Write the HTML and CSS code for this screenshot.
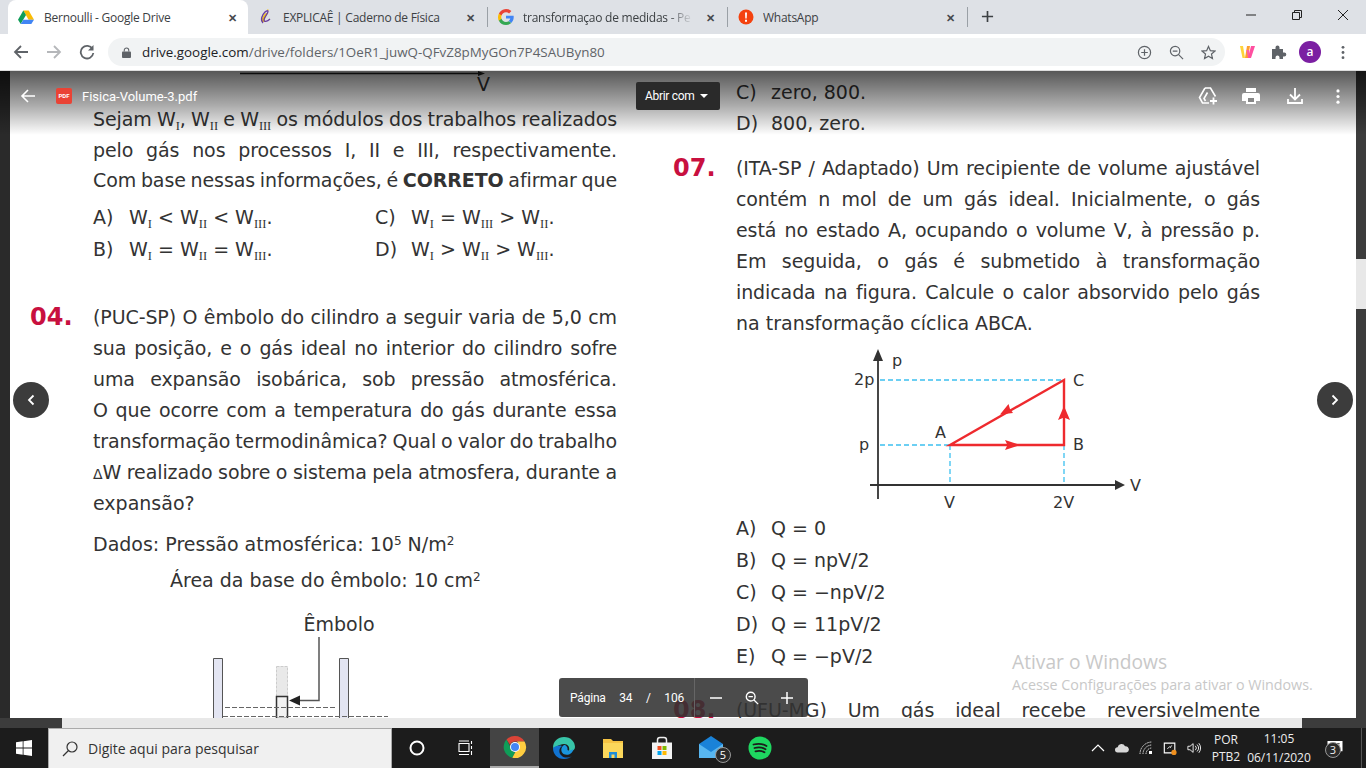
FILE: index.html
```html
<!DOCTYPE html>
<html>
	<head>
		<meta charset="UTF-8">
		<title>Bernoulli - Google Drive</title>
		<link rel="stylesheet" href="styles.css">
	</head>
	<body>
		<div id="tabs">
			<div class="tab on">
				<svg class="ico" viewBox="0 0 16 16"><path d="M5.3 1.500h5.400L16 10.700h-5.400z" fill="#fbbc04"/><path d="M5.300 1.500 0 10.700l2.700 4.300L8 6z" fill="#0f9d58"/><path d="M5.400 10.700H16L13.300 15H2.700z" fill="#4285f4"/></svg>
				<div class="title">Bernoulli - Google Drive</div>
				<div class="x">✕</div>
			</div>
			<div class="tab">
				<svg class="ico" viewBox="0 0 16 16"><path d="M4 13c-1-3 1-7 4-9l2 0C8 7 6 10 7 13zM9 0l2 1-1 1z" fill="#f2c31c"/><path d="M5 14C2 11 4 6 7 3c1-1 3-2 3-.5C10 5 6 8 6 11c0 2 3 2 6-1" fill="none" stroke="#6a3fa0" stroke-width="1.300"/></svg>
				<div class="title">EXPLICAÊ | Caderno de Física</div>
				<div class="x">✕</div>
			</div>
			<div class="sep"></div>
			<div class="tab">
				<svg class="ico" viewBox="0 0 16 16"><path d="M15.700 8.200c0-.6 0-1-.1-1.500H8v2.900h4.300a3.700 3.700 0 0 1-1.600 2.400l2.500 1.900c1.500-1.300 2.500-3.400 2.500-5.700z" fill="#4285f4"/><path d="M8 16c2.200 0 4-.7 5.200-1.900l-2.500-1.900c-.7.500-1.600.8-2.700.8-2.100 0-3.900-1.400-4.500-3.300H.9v2A8 8 0 0 0 8 16z" fill="#34a853"/><path d="M3.500 9.700a4.800 4.800 0 0 1 0-3.100v-2H.9a8 8 0 0 0 0 7.200z" fill="#fbbc04"/><path d="M8 3.200c1.200 0 2.300.4 3.100 1.200l2.300-2.300A8 8 0 0 0 .9 4.500l2.600 2C4.100 4.600 5.900 3.200 8 3.200z" fill="#ea4335"/></svg>
				<div class="title fade">transformaçao de medidas - Pe</div>
				<div class="x">✕</div>
			</div>
			<div class="sep"></div>
			<div class="tab">
				<svg class="ico" viewBox="0 0 16 16"><circle cx="8" cy="8" r="7.500" fill="#f4420f"/><path d="M7 3.500h2l-.3 6H7.300zM7 10.700h2v2H7z" fill="#fff"/></svg>
				<div class="title">WhatsApp</div>
				<div class="x">✕</div>
			</div>
			<div class="sep"></div>
			<svg class="plus" viewBox="0 0 14 14"><path d="M7 1v12M1 7h12" stroke="#3c4043" stroke-width="1.800"/></svg>
			<div class="win">
				<svg viewBox="0 0 12 12"><path d="M1 6h10" stroke="#222"/></svg>
				<svg viewBox="0 0 12 12"><path d="M1.500 3.500h7v7h-7zM3.500 3.500v-2h7v7h-2" fill="none" stroke="#222"/></svg>
				<svg viewBox="0 0 12 12"><path d="M1 1l10 10M11 1 1 11" stroke="#222"/></svg>
			</div>
		</div>

		<div id="bar">
			<svg class="nav" viewBox="0 0 16 16"><path d="M15 8H2M8 2 2 8l6 6" fill="none" stroke="#5f6368" stroke-width="1.800"/></svg>
			<svg class="nav" viewBox="0 0 16 16"><path d="M1 8h13M8 2l6 6-6 6" fill="none" stroke="#b5b7ba" stroke-width="1.800"/></svg>
			<svg class="nav" viewBox="0 0 16 16"><path d="M13.500 5A6.300 6.300 0 1 0 14.300 9" fill="none" stroke="#5f6368" stroke-width="1.800"/><path d="M14.500 1v5.500H9z" fill="#5f6368"/></svg>
			<div id="url">
				<svg class="lock" viewBox="0 0 10 12"><path d="M2.500 5V3.500a2.500 2.500 0 0 1 5 0V5" fill="none" stroke="#5f6368" stroke-width="1.200"/><rect y="5" width="10" height="7" rx="1" fill="#5f6368"/></svg>
				<div class="addr"><b>drive.google.com</b>/drive/folders/1OeR1_juwQ-QFvZ8pMyGOn7P4SAUByn80</div>
				<svg class="uico" viewBox="0 0 16 16"><circle cx="8" cy="8" r="6.500" fill="none" stroke="#5f6368" stroke-width="1.300"/><path d="M8 4.500v7M4.500 8h7" stroke="#5f6368" stroke-width="1.300"/></svg>
				<svg class="uico" viewBox="0 0 16 16"><circle cx="6.500" cy="6.500" r="5" fill="none" stroke="#5f6368" stroke-width="1.300"/><path d="M10 10l5 5M4 6.500h5" stroke="#5f6368" stroke-width="1.300"/></svg>
				<svg class="uico last" viewBox="0 0 16 16"><path d="M8 1.500l2 4.500 4.800.5-3.600 3.200 1 4.800L8 12l-4.200 2.500 1-4.800L1.200 6.500 6 6z" fill="none" stroke="#5f6368" stroke-width="1.300"/></svg>
			</div>
			<svg class="ext" viewBox="0 0 16 14"><path d="M0 1h3l2 12H2.500z" fill="#ffd43a"/><path d="M5 13 7 1h3l-2 12z" fill="#ff9d2e"/><path d="M8 13 6.500 5H9l1.500 8z" fill="#ff5fa2"/><path d="M8 13l3-12h4l-4 12z" fill="#ff4fa0"/></svg>
			<svg class="ext" viewBox="0 0 16 16"><path d="M1 5h3.500V3.500a2 2 0 0 1 4 0V5H12v3.500h1.300a2 2 0 0 1 0 4H12V15H8.500v-1.500a2 2 0 0 0-4 0V15H1z" fill="#5f6368"/></svg>
			<div class="avatar">a</div>
			<svg class="dots" viewBox="0 0 4 16"><circle cx="2" cy="2.500" r="1.500" fill="#5f6368"/><circle cx="2" cy="8" r="1.500" fill="#5f6368"/><circle cx="2" cy="13.500" r="1.500" fill="#5f6368"/></svg>
		</div>

		<div id="viewer">
			<div id="mid">
				<div class="gutter"></div>
				<div id="page">
					<div class="col">
						<svg class="figtop" viewBox="0 0 480 33">
							<path d="M210 2.500h240" stroke="#222" stroke-width="1.500"/><path d="M448 0l7 2.500-7 2.500z" fill="#222"/>
							<text x="447" y="20" class="figt big">V</text>
						</svg>
						<div class="txt">
							<div class="ln">Sejam W<sub>I</sub>, W<sub>II</sub> e W<sub>III</sub> os módulos dos trabalhos realizados</div>
							<div class="ln">pelo gás nos processos I, II e III, respectivamente.</div>
							<div class="ln">Com base nessas informações, é <b>CORRETO</b> afirmar que</div>
						</div>
						<div class="opts two">
							<div class="opt"><span>A)</span>W<sub>I</sub> &lt; W<sub>II</sub> &lt; W<sub>III</sub>.</div>
							<div class="opt"><span>C)</span>W<sub>I</sub> = W<sub>III</sub> &gt; W<sub>II</sub>.</div>
							<div class="opt"><span>B)</span>W<sub>I</sub> = W<sub>II</sub> = W<sub>III</sub>.</div>
							<div class="opt"><span>D)</span>W<sub>I</sub> &gt; W<sub>II</sub> &gt; W<sub>III</sub>.</div>
						</div>
						<div class="q q04">
							<div class="num">04.</div>
							<div>
								<div class="ln">(PUC-SP) O êmbolo do cilindro a seguir varia de 5,0 cm</div>
								<div class="ln">sua posição, e o gás ideal no interior do cilindro sofre</div>
								<div class="ln">uma expansão isobárica, sob pressão atmosférica.</div>
								<div class="ln">O que ocorre com a temperatura do gás durante essa</div>
								<div class="ln">transformação termodinâmica? Qual o valor do trabalho</div>
								<div class="ln"><small>Δ</small>W realizado sobre o sistema pela atmosfera, durante a</div>
								<div class="end">expansão?</div>
							</div>
						</div>
						<div class="dados">Dados: Pressão atmosférica: 10<sup>5</sup> N/m<sup>2</sup></div>
						<div class="area">Área da base do êmbolo: 10 cm<sup>2</sup></div>
						<svg class="figemb" viewBox="0 0 200 118">
							<text x="139" y="31" text-anchor="middle" class="figt big">Êmbolo</text>
							<path d="M13.500 58.500h9v60h-9zM139.500 58.500h9v60h-9z" fill="#e3e5f2" stroke="#555"/>
							<path d="M76.500 66.500h11v30h-11z" fill="#e9e9e9" stroke="#ccc" stroke-dasharray="3 1"/>
							<path d="M76.500 96.500h11v22h-11z" fill="#f2f2f2" stroke="#333" stroke-width="1.500"/>
							<path d="M25 107.500h112M23 116.500h165" stroke="#666" stroke-dasharray="5 2"/>
							<path d="M119 37v63.500H96" fill="none" stroke="#555" stroke-width="1.500"/>
							<path d="M89 100.500l11-5v10z" fill="#222"/>
						</svg>
					</div>
					<div class="col">
						<div class="opts first">
							<div class="opt"><span>C)</span>zero, 800.</div>
							<div class="opt"><span>D)</span>800, zero.</div>
						</div>
						<div class="q q07">
							<div class="num">07.</div>
							<div>
								<div class="ln">(ITA-SP / Adaptado) Um recipiente de volume ajustável</div>
								<div class="ln">contém n mol de um gás ideal. Inicialmente, o gás</div>
								<div class="ln">está no estado A, ocupando o volume V, à pressão p.</div>
								<div class="ln">Em seguida, o gás é submetido à transformação</div>
								<div class="ln">indicada na figura. Calcule o calor absorvido pelo gás</div>
								<div class="end">na transformação cíclica ABCA.</div>
							</div>
						</div>
						<svg class="figpv" viewBox="0 0 330 172">
							<g fill="none" stroke="#3cc0f0" stroke-width="1.300" stroke-dasharray="5 3">
								<path d="M50 40h184M50 105h70M120 105v40M234 105v40"/>
							</g>
							<path d="M48 159V14M40 145h248" stroke="#333" stroke-width="1.800" fill="none"/>
							<path d="M48 9l5 12H43zM295 145l-10 5v-10z" fill="#333"/>
							<path d="M120 105h114V40z" fill="none" stroke="#ee2a2e" stroke-width="2.400"/>
							<path d="M190 105l-15 5 2.500-5-2.500-5zM234 66l6 14-6-2.500-6 2.500zM170 74.500l13-1.500-3-4-1.500-5z" fill="#ee2a2e"/>
							<text x="62" y="26" class="figt">p</text>
							<text x="24" y="45" class="figt">2p</text>
							<text x="29" y="110" class="figt">p</text>
							<text x="105" y="98" class="figt">A</text>
							<text x="243" y="110" class="figt">B</text>
							<text x="243" y="46" class="figt">C</text>
							<text x="114" y="168" class="figt">V</text>
							<text x="223" y="168" class="figt">2V</text>
							<text x="300" y="151" class="figt">V</text>
						</svg>
						<div class="opts five">
							<div class="opt"><span>A)</span>Q = 0</div>
							<div class="opt"><span>B)</span>Q = npV/2</div>
							<div class="opt"><span>C)</span>Q = −npV/2</div>
							<div class="opt"><span>D)</span>Q = 11pV/2</div>
							<div class="opt"><span>E)</span>Q = −pV/2</div>
						</div>
						<div class="q q08">
							<div class="num">08.</div>
							<div class="ln">(UFU-MG) Um gás ideal recebe reversivelmente</div>
						</div>
					</div>
				</div>
				<div class="vbar"><div class="vthumb"></div></div>
			</div>
			<div class="hbar"><div class="hthumb"></div></div>

			<div id="head">
				<svg class="hback" viewBox="0 0 16 16"><path d="M15 8H2M8 2 2 8l6 6" fill="none" stroke="#fff" stroke-width="1.600"/></svg>
				<div class="pdf">PDF</div>
				<div class="fname">Fisica-Volume-3.pdf</div>
				<div class="abrir">Abrir com <i></i></div>
				<svg class="hico" viewBox="0 0 20 20"><path d="M7 2h5.500l5 8.500M7 2 1.500 11.500 4.500 17H11M9.500 6.500 6 12.500 7.500 15" fill="none" stroke="#fff" stroke-width="1.600"/><path d="M15.500 11.500v7M12 15h7" stroke="#fff" stroke-width="1.800"/></svg>
				<svg class="hico" viewBox="0 0 20 20"><path d="M5 2h10v4H5zM3 7h14a2 2 0 0 1 2 2v6h-4v3H5v-3H1V9a2 2 0 0 1 2-2z" fill="#fff"/><path d="M7 12h6v4H7z" fill="#888"/></svg>
				<svg class="hico dl" viewBox="0 0 20 20"><path d="M10 2v11M5 8.500l5 5 5-5M3 13v4h14v-4" fill="none" stroke="#fff" stroke-width="1.800"/></svg>
				<svg class="hdots" viewBox="0 0 4 16"><circle cx="2" cy="2" r="1.700" fill="#fff"/><circle cx="2" cy="8" r="1.700" fill="#fff"/><circle cx="2" cy="14" r="1.700" fill="#fff"/></svg>
			</div>

			<div class="round rl"><svg viewBox="0 0 10 12"><path d="M7.500 1.500 3 6l4.500 4.500" fill="none" stroke="#fff" stroke-width="1.800"/></svg></div>
			<div class="round rr"><svg viewBox="0 0 10 12"><path d="M2.500 1.500 7 6l-4.500 4.500" fill="none" stroke="#fff" stroke-width="1.800"/></svg></div>

			<div class="mark">
				<div class="m1">Ativar o Windows</div>
				<div class="m2">Acesse Configurações para ativar o Windows.</div>
			</div>

			<div id="pager">
				<div class="pinfo"><span>Página</span><span>34</span><span>/</span><span>106</span></div>
				<div class="pzoom">
					<svg viewBox="0 0 14 14"><path d="M1 7h12" stroke="#fff" stroke-width="1.500"/></svg>
					<svg viewBox="0 0 16 16"><circle cx="6.500" cy="6.500" r="5" fill="none" stroke="#fff" stroke-width="1.600"/><path d="M10 10l5 5M4 6.500h5" stroke="#fff" stroke-width="1.500"/></svg>
					<svg viewBox="0 0 14 14"><path d="M1 7h12" stroke="#fff" stroke-width="1.500"/><path d="M7 1v12" stroke="#fff" stroke-width="1.500"/></svg>
				</div>
			</div>
		</div>

		<div id="task">
			<div class="start"><svg viewBox="0 0 16 16"><path d="M0 2.300 6.700 1.300v6.300H0zM7.500 1.200 16 0v7.600H7.500zM0 8.400h6.700v6.300L0 13.700zM7.500 8.400H16V16l-8.500-1.200z" fill="#fff"/></svg></div>
			<div class="search">
				<svg viewBox="0 0 16 16"><circle cx="10" cy="6" r="5" fill="none" stroke="#333" stroke-width="1.200"/><path d="M6.500 9.500 1 15" stroke="#333" stroke-width="1.300"/></svg>
				<span>Digite aqui para pesquisar</span>
			</div>
			<div class="tk"><svg class="i16" viewBox="0 0 16 16"><circle cx="8" cy="8" r="6.500" fill="none" stroke="#fff" stroke-width="2"/></svg></div>
			<div class="tk"><svg class="i16" viewBox="0 0 16 16"><path d="M1 3.500h10v8H1zM1 1h10M1 14.500h10M13.500 1v3M13.500 6v3M13.500 11v4" fill="none" stroke="#fff" stroke-width="1.100"/></svg></div>
			<div class="tk act">
				<svg class="i24" viewBox="0 0 24 24"><path d="M12 1a11 11 0 0 1 9.500 5.500H12a5.500 5.500 0 0 0-5 3.200L3.500 4.600A11 11 0 0 1 12 1z" fill="#db4437"/><path d="M3.500 4.600 7.800 13a5 5 0 0 0 4.500 4l-3 5.700A11 11 0 0 1 3.500 4.600z" fill="#0f9d58"/><path d="M21.500 6.500A11 11 0 0 1 9.300 22.700L14.500 13a5 5 0 0 0-.5-6.500z" fill="#ffcd40"/><circle cx="12" cy="12" r="5" fill="#fff"/><circle cx="12" cy="12" r="4" fill="#4285f4"/></svg>
			</div>
			<div class="tk">
				<svg class="i24" viewBox="0 0 24 24"><path d="M1 12C1 5 6 1 12 1c7 0 11 5 11 10 0 3-3 5-6 4 1-4-1-7-5-7-5 0-9 4-11 4z" fill="#38c5a8"/><path d="M1 12c2-2 6-3 9-2-3 2-4 7 0 10 2 2 7 2 10 0-2 2-5 3-8 3C5 23 1 18 1 12z" fill="#1173d1"/><path d="M12 9c2 0 4 2 3.500 5 2 1 4 .5 6-1-1 5-6 7-10 5-3-2-3-7 .5-9z" fill="#1a95dd"/></svg>
			</div>
			<div class="tk">
				<svg class="i24" viewBox="0 0 24 24"><path d="M2 3h8l2 2h10v17H2z" fill="#f6c343"/><path d="M2 7h20v15H2z" fill="#fbd75b"/><path d="M8 16h8v6H8z" fill="#1e8dd8"/><path d="M10.500 18.500h3V22h-3z" fill="#fbd75b"/></svg>
			</div>
			<div class="tk">
				<svg class="i24" viewBox="0 0 24 24"><path d="M7.500 7V4a2.500 2.500 0 0 1 2.500-2.500h4A2.500 2.500 0 0 1 16.500 4v3" fill="none" stroke="#eee" stroke-width="1.500"/><path d="M2 6.500h20V23H2z" fill="#f3f3f3"/><path d="M7.500 10h4v4h-4z" fill="#f25022"/><path d="M12.500 10h4v4h-4z" fill="#7fba00"/><path d="M7.500 15h4v4h-4z" fill="#00a4ef"/><path d="M12.500 15h4v4h-4z" fill="#ffb900"/></svg>
			</div>
			<div class="tk">
				<svg class="i24" viewBox="0 0 24 24"><path d="M0 8 12 0l12 8v14H0z" fill="#1a82d8"/><path d="M0 8l12 8 12-8v14H0z" fill="#58b6f0"/></svg>
				<div class="badge bm">5</div>
			</div>
			<div class="tk">
				<svg class="i24" viewBox="0 0 24 24"><circle cx="12" cy="12" r="11.500" fill="#1ed760"/><path d="M5.500 8.500c4-1 9-1 13 1.500M6.500 12c3.500-1 8-.6 11 1.300M7.500 15.300c3-.8 6.500-.5 9 1" fill="none" stroke="#1c1c1c" stroke-width="1.800" stroke-linecap="round"/></svg>
			</div>
			<div class="tray">
				<svg class="tr" viewBox="0 0 14 14"><path d="M1 10l6-6 6 6" fill="none" stroke="#fff" stroke-width="1.200"/></svg>
				<svg class="tr" viewBox="0 0 16 14"><path d="M3 12a3 3 0 0 1 0-6 4.500 4.500 0 0 1 8.500-1A3.500 3.500 0 0 1 13 12z" fill="#d8d8d8"/></svg>
				<svg class="tr" viewBox="0 0 14 14"><path d="M1 13A12 12 0 0 1 13 1M4 13a9 9 0 0 1 9-9M7 13a6 6 0 0 1 6-6" fill="none" stroke="#ddd" stroke-dasharray="1.500 .8"/><path d="M10 10h3v3h-3z" fill="#fff"/></svg>
				<svg class="tr" viewBox="0 0 16 16"><path d="M1.500 2.500h12v11h-12z" fill="none" stroke="#fff" stroke-width="1.300"/><path d="M5 9l3-3M8 8l2-3" stroke="#fff"/><circle cx="12.500" cy="13" r="3" fill="#f0901e"/></svg>
				<svg class="tr" viewBox="0 0 16 14"><path d="M1 5h2.500L7 2v10L3.500 9H1zM9.500 4.500a3.500 3.500 0 0 1 0 5M11.500 3a6 6 0 0 1 0 8M13.500 1.500a8.500 8.500 0 0 1 0 11" fill="none" stroke="#fff"/></svg>
				<div class="lang"><div>POR</div><div>PTB2</div></div>
				<div class="clock"><div>11:05</div><div>06/11/2020</div></div>
				<div class="notif">
					<svg viewBox="0 0 16 16"><path d="M0 1h16v11H6l-3 3v-3H0z" fill="#fff"/><path d="M3 4h10M3 6.500h10M3 9h7" stroke="#1c1c1c"/></svg>
					<div class="badge bn">3</div>
				</div>
				<div class="peek"></div>
			</div>
		</div>
	</body>
</html>
```

FILE: styles.css
```css
*{
	box-sizing: border-box;
}
html, body{
	margin: 0;
	height: 768px;
	overflow: hidden;
}
body{
	font-family: "Open Sans", "Noto Sans", sans-serif;
	background: #fff;
}
svg{
	display: block;
	flex: none;
}

/* chrome */
#tabs{
	height: 34px;
	background: #dee1e6;
	display: flex;
	align-items: stretch;
	padding-left: 8px;
	font-size: 12px;
	letter-spacing: -.25px;
	color: #3c4043;
}
.tab{
	width: 239px;
	display: flex;
	align-items: center;
	gap: 9px;
	padding: 0 9px 0 10px;
}
.tab.on{
	background: #fff;
	border-radius: 8px 8px 0 0;
	width: 240px;
	gap: 10px;
	padding-right: 8px;
}
.ico{
	width: 16px;
	height: 16px;
}
.title{
	flex: 1;
	white-space: nowrap;
	overflow: hidden;
}
.title.fade{
	-webkit-mask-image: linear-gradient(to right, #000 85%, transparent);
	mask-image: linear-gradient(to right, #000 85%, transparent);
}
.x{
	width: 16px;
	text-align: center;
	font-size: 11px;
	font-weight: bold;
	color: #45494d;
}
.sep{
	width: 1px;
	height: 20px;
	margin-top: 7px;
	background: #9aa0a6;
}
.plus{
	width: 13px;
	height: 13px;
	margin: 10px 0 0 13px;
}
.win{
	margin-left: auto;
	display: flex;
	gap: 34px;
	padding: 9px 17px 0 0;
}
.win svg{
	width: 12px;
	height: 12px;
}
#bar{
	height: 37px;
	background: #fff;
	display: flex;
	align-items: center;
	padding-left: 13px;
	border-bottom: 1px solid #ddd;
}
.nav{
	width: 16px;
	height: 16px;
	margin-right: 17px;
}
#url{
	width: 1117px;
	height: 28px;
	margin-left: -4px;
	border-radius: 14px;
	background: #f1f3f4;
	display: flex;
	align-items: center;
	padding-left: 14px;
	font-size: 13.400px;
	color: #5f6368;
}
.lock{
	width: 9px;
	height: 11px;
}
.addr{
	margin-left: 11px;
	flex: 1;
	white-space: nowrap;
}
.addr b{
	font-weight: normal;
	color: #202124;
}
.uico{
	width: 15px;
	height: 15px;
	margin-right: 17px;
}
.uico.last{
	margin-right: 9px;
}
.ext{
	width: 16px;
	height: 16px;
	margin-left: 15px;
}
.avatar{
	width: 22px;
	height: 22px;
	margin-left: 12px;
	border-radius: 50%;
	background: #7b1fa2;
	color: #fff;
	font-size: 12px;
	font-weight: 600;
	line-height: 21px;
	text-align: center;
}
.dots{
	width: 4px;
	height: 15px;
	margin-left: 20px;
}

/* viewer */
#viewer{
	position: relative;
	height: 657px;
	display: flex;
	flex-direction: column;
	overflow: hidden;
}
#mid{
	height: 647px;
	display: flex;
}
.gutter{
	width: 10px;
	background: #2a2a2a;
}
#page{
	width: 1346px;
	background: #fff;
	overflow: hidden;
	display: grid;
	grid-template-columns: 587px 587px;
	column-gap: 56px;
	padding-left: 20px;
	font-family: "DejaVu Sans", Verdana, sans-serif;
	font-size: 19px;
	line-height: 31px;
	color: #333;
}
.vbar{
	width: 10px;
	background: #3c3c3c;
	padding-top: 188px;
}
.vthumb{
	height: 50px;
	background: #e8e8e8;
}
.hbar{
	height: 10px;
	background: #3c3c3c;
	padding-left: 62px;
}
.hthumb{
	width: 1240px;
	height: 10px;
	background: #e8e8e8;
}
.figtop{
	width: 480px;
	height: 33px;
}
.figt{
	font-family: "DejaVu Sans", sans-serif;
	font-size: 16px;
	fill: #333;
}
.figt.big{
	font-size: 19px;
}
.txt, .opts, .dados, .area{
	margin-left: 63px;
}
.txt{
	line-height: 30.500px;
}
.ln{
	word-spacing: -3px;
	letter-spacing: -.1px;
	text-align: justify;
	text-align-last: justify;
}
.ln small{
	font-size: 14px;
	line-height: 0;
}
sub{
	font-family: "Liberation Serif", serif;
	font-size: 12.500px;
	line-height: 0;
	vertical-align: -4px;
}
sup{
	font-size: 12px;
	line-height: 0;
	vertical-align: 6px;
}
.opts{
	line-height: 32px;
}
.opts.two{
	display: grid;
	grid-template-columns: 282px 1fr;
	margin-top: 5.500px;
}
.opts.first{
	line-height: 31px;
	margin-top: 6px;
}
.opt span{
	display: inline-block;
	width: 36px;
}
.first .opt span, .five .opt span{
	width: 35px;
}
.q{
	display: flex;
}
.q > div:last-child{
	width: 524px;
}
.num{
	width: 63px;
	flex: none;
	font-size: 24px;
	font-weight: bold;
	color: #c8103f;
}
.q04{
	margin-top: 36.500px;
}
.q07{
	margin-top: 13.500px;
}
.q08{
	margin-top: 23px;
}
.dados{
	margin-top: 10px;
}
.area{
	margin-top: 5px;
	padding-left: 77px;
}
.figemb{
	width: 200px;
	height: 118px;
	margin: 4px 0 0 170px;
}
.figpv{
	width: 330px;
	height: 172px;
	margin: 1.500px 0 0 157px;
}

/* overlays */
#head{
	position: absolute;
	left: 0;
	top: 0;
	width: 100%;
	height: 64px;
	padding: 0 0 14px 20px;
	display: flex;
	align-items: center;
	background: linear-gradient(to bottom, rgba(0,0,0,.66), rgba(0,0,0,.32) 55%, rgba(0,0,0,0));
	color: #fff;
	font-family: Roboto, sans-serif;
	font-size: 13px;
}
.hback{
	width: 16px;
	height: 16px;
}
.pdf{
	width: 16px;
	height: 16px;
	margin-left: 20px;
	border-radius: 2px;
	background: #ea4335;
	font-size: 6px;
	font-weight: bold;
	line-height: 16px;
	text-align: center;
}
.fname{
	margin-left: 10px;
	width: 554px;
}
.abrir{
	width: 84px;
	height: 28px;
	margin-right: 478px;
	border-radius: 2px;
	background: #2a2a2a;
	font-size: 12px;
	letter-spacing: -.3px;
	line-height: 28px;
	padding-left: 9px;
}
.abrir i{
	display: inline-block;
	margin-left: 3px;
	vertical-align: 2px;
	border: 4px solid transparent;
	border-top-color: #fff;
	border-bottom: 0;
}
.hico{
	width: 20px;
	height: 20px;
	margin-right: 23px;
}
.hico.dl{
	margin-left: 1px;
}
.hdots{
	width: 4px;
	height: 15px;
	margin-left: 8px;
}
.round{
	position: absolute;
	top: 311px;
	width: 36px;
	height: 36px;
	border-radius: 50%;
	background: #3c3c3c;
	display: flex;
	align-items: center;
	justify-content: center;
}
.round svg{
	width: 10px;
	height: 12px;
}
.rl{
	left: 13px;
}
.rr{
	left: 1317px;
}
.mark{
	position: absolute;
	left: 1012px;
	top: 579px;
	color: #c8c8c8;
}
.m1{
	font-size: 19.200px;
	line-height: 24px;
}
.m2{
	font-size: 14.300px;
	line-height: 22px;
	white-space: nowrap;
}
#pager{
	position: absolute;
	left: 559px;
	top: 607px;
	width: 249px;
	height: 39px;
	border-radius: 3px;
	background: rgba(50,50,50,.88);
	display: flex;
	color: #fff;
	font-family: Roboto, sans-serif;
	font-size: 12px;
	letter-spacing: -.2px;
}
.pinfo{
	width: 136px;
	padding: 0 10px 0 11px;
	display: flex;
	align-items: center;
	justify-content: space-between;
	border-right: 1px solid #666;
}
.pzoom{
	flex: 1;
	display: flex;
	align-items: center;
	justify-content: space-between;
	padding: 0 14px;
}
.pzoom svg{
	width: 14px;
	height: 14px;
}

/* taskbar */
#task{
	height: 40px;
	background: #1c1c1c;
	display: flex;
	color: #fff;
}
.start{
	width: 48px;
	display: flex;
	align-items: center;
	justify-content: center;
}
.start svg{
	width: 16px;
	height: 16px;
}
.search{
	width: 344px;
	background: #f0f0f0;
	border: 1px solid #aaa;
	border-bottom: 0;
	display: flex;
	align-items: center;
	gap: 10px;
	padding-left: 13px;
	font-size: 14px;
	color: #333;
}
.search svg{
	width: 16px;
	height: 16px;
}
.tk{
	position: relative;
	width: 49px;
	display: flex;
	align-items: center;
	justify-content: center;
}
.tk.act{
	background: #444;
	border-bottom: 2px solid #aaa;
}
.i16{
	width: 16px;
	height: 16px;
}
.i24{
	width: 24px;
	height: 24px;
}
.badge{
	position: absolute;
	width: 16px;
	height: 16px;
	border-radius: 50%;
	border: 1px solid #999;
	background: #2a2a2a;
	font-size: 11px;
	line-height: 14px;
	text-align: center;
}
.bm{
	left: 29px;
	top: 19px;
}
.bn{
	left: 12px;
	top: 14px;
}
.tray{
	margin-left: auto;
	display: flex;
	align-items: center;
	font-size: 12px;
	color: #eee;
}
.tr{
	width: 14px;
	height: 14px;
	margin-right: 10px;
}
.lang{
	width: 34px;
	text-align: center;
	line-height: 17px;
	margin-left: -2px;
}
.clock{
	width: 68px;
	text-align: center;
	line-height: 19px;
	margin-left: 2px;
}
.notif{
	position: relative;
	width: 48px;
	height: 40px;
	padding: 12px 0 0 14px;
}
.notif svg{
	width: 16px;
	height: 15px;
}
.peek{
	width: 5px;
	height: 40px;
	border-left: 1px solid #555;
}
```
